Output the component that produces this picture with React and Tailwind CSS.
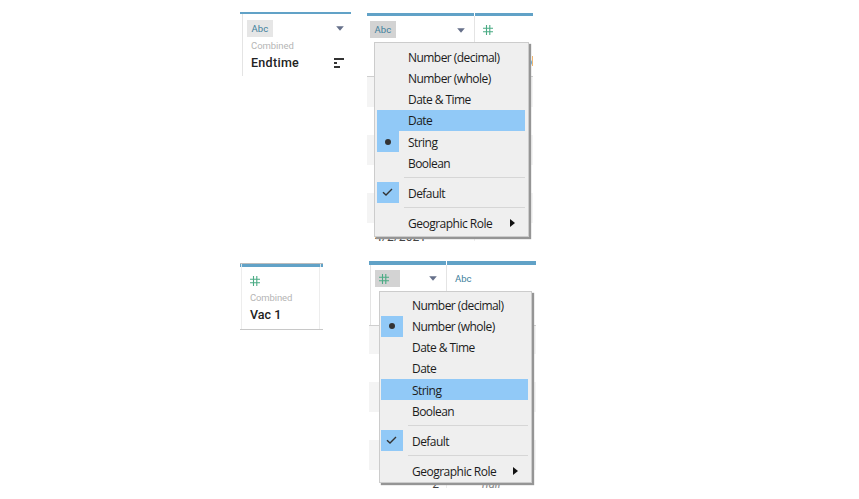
import React from "react";

const labels = ["Number (decimal)", "Number (whole)", "Date & Time", "Date", "String", "Boolean"];

function Hash() {
  return (
    <svg width="10" height="10" viewBox="0 0 10 10" fill="none" stroke="#4aab84" strokeWidth="1.1">
      <path d="M3.5 0V10M6.8 0V10M0 3.2H10M0 6.8H10" />
    </svg>
  );
}

function Caret() {
  return (
    <svg width="8" height="5" viewBox="0 0 8 5" fill="#66708a">
      <path d="M0.2 0.3H7.8L4 4.7Z" />
    </svg>
  );
}

function Marker({ on, children }) {
  return (
    <span className={`flex h-full w-[21.5px] shrink-0 items-center justify-center ${on ? "bg-[#91c9f7]" : ""}`}>
      {children}
    </span>
  );
}

function Check() {
  return (
    <svg width="11" height="9" viewBox="0 0 11 9" fill="none" stroke="#333" strokeWidth="1.4">
      <path d="M1 4.2L4 7L10 1" />
    </svg>
  );
}

function Separator() {
  return <div className="ml-[27px] h-px bg-[#d6d6d6]" />;
}

function Menu({ className, checked, active }) {
  return (
    <div
      className={`absolute border border-[#cccccc] bg-[#efefef] shadow-[2px_2px_1px_#959595] font-['Open_Sans','Noto_Sans',sans-serif] text-[12px] tracking-[-0.55px] text-[#1c1c1c] ${className}`}
    >
      {labels.map((label) => (
        <div key={label} className={`flex h-[21.17px] items-center ${active === label ? "bg-[#91c9f7]" : ""}`}>
          <Marker on={checked === label}>
            {checked === label && <span className="size-[6px] rounded-full bg-[#333]" />}
          </Marker>
          <span className="ml-[9.5px] whitespace-nowrap pt-[1.6px]">{label}</span>
        </div>
      ))}
      <div className="h-[4px]" />
      <Separator />
      <div className="mt-[4px] flex h-[21px] items-center">
        <Marker on>
          <Check />
        </Marker>
        <span className="ml-[9.5px] pt-[2px]">Default</span>
      </div>
      <div className="h-[4px]" />
      <Separator />
      <div className="mt-[4px] flex h-[21px] items-center pr-[10px]">
        <span className="ml-[31px] whitespace-nowrap pt-[2px] tracking-[-0.5px]">Geographic Role</span>
        <svg className="ml-auto" width="5" height="8" viewBox="0 0 5 8" fill="#111">
          <path d="M0 0L5 4L0 8Z" />
        </svg>
      </div>
    </div>
  );
}

function Stripes({ first }) {
  return (
    <>
      <div className={`bg-[#f4f4f4] ${first}`} />
      <div className="h-[28px]" />
      <div className="h-[30px] bg-[#f4f4f4]" />
      <div className="h-[28px]" />
      <div className="h-[30px] bg-[#f4f4f4]" />
    </>
  );
}

export default function App() {
  return (
    <div className="h-[499px] w-[859px] overflow-hidden bg-white pl-[240px] pt-[12px] font-[Roboto,sans-serif]">
      <div className="flex h-[249px] items-start">
        <section className="h-[64px] w-[111px] border-t-2 border-[#61a2c7]">
          <div className="ml-[2px] h-[62px] border-l border-[#e4e4e4] pl-[4px] pt-[6px]">
            <div className="flex items-center justify-between pr-[7px]">
              <span className="flex h-[17px] w-[26px] items-center justify-center bg-[#e6e6e6] pt-px text-[9.5px] tracking-[0.15px] text-[#40809c]">Abc</span>
              <Caret />
            </div>
            <div className="ml-[4px] mt-[2px] text-[9.5px] leading-[14px] tracking-[-0.05px] text-[#b5b5b5]">Combined</div>
            <div className="ml-[4px] mt-px flex items-center justify-between pr-[7px]">
              <span className="text-[12.5px] font-medium leading-[18px] tracking-[0.3px] text-[#222]">Endtime</span>
              <svg width="10" height="10" viewBox="0 0 10 10" fill="#333">
                <path d="M0 0H10V2H0ZM0 4H3V6H0ZM0 8H6V10H0Z" />
              </svg>
            </div>
          </div>
        </section>

        <section className="relative ml-[16px] h-[229px] w-[166px]">
          <div className="h-full overflow-hidden">
            <div className="flex h-[4px] gap-px pt-px">
              <div className="w-[107px] bg-[#61a2c7]" />
              <div className="flex-1 bg-[#61a2c7]" />
            </div>
            <div className="flex h-[61px] border-b border-[#cfcfcf]">
              <div className="flex h-full w-[108px] items-start justify-between border-r border-[#e4e4e4] pl-[3px] pr-[9px] pt-[5px]">
                <span className="flex h-[17px] w-[26px] items-center justify-center bg-[#d3d3d3] pt-px text-[9.5px] tracking-[0.15px] text-[#40809c]">Abc</span>
                <span className="mt-[7px]"><Caret /></span>
              </div>
              <div className="flex flex-1 flex-col justify-between overflow-hidden pb-[6px] pl-[8px] pt-[9px]">
                <Hash />
                <div className="flex justify-end text-[13px] font-medium leading-[17px] text-[#333]">
                  <span>o</span>
                  <span className="mt-[3px] h-[10px] w-px bg-[#efb672]" />
                </div>
              </div>
            </div>
            <Stripes first="h-[30px]" />
            <div className="flex h-[18px]">
              <div className="w-[108px] border-r border-[#ededed] pl-[8px] text-[12px] leading-[28px] tracking-[0.1px] text-[#444]">4/2/2021</div>
            </div>
          </div>
          <Menu className="left-[7px] top-[30px] h-[195px] w-[155px] pl-[2px] pr-[3px] pt-[3.5px]" checked="String" active="Date" />
        </section>
      </div>

      <div className="flex items-start">
        <section className="mt-[2px] h-[67px] w-[83px] border-b border-t border-b-[#c8c8c8] border-t-[#bcbcbc]">
          <div className="flex h-[3px] gap-px bg-[#d7e6ee]">
            <div className="w-px bg-[#61a2c7]" />
            <div className="flex-1 bg-[#61a2c7]" />
            <div className="w-[2px] bg-[#61a2c7]" />
          </div>
          <div className="mx-px mr-[3px] h-[62px] border-x border-[#ededed] pl-[8px] pt-[9px]">
            <Hash />
            <div className="mt-[5px] text-[9.5px] leading-[14px] tracking-[-0.12px] text-[#b5b5b5]">Combined</div>
            <div className="mt-px text-[12.5px] font-medium leading-[18px] text-[#222]">Vac 1</div>
          </div>
        </section>

        <section className="relative ml-[46px] h-[227px] w-[167px]">
          <div className="h-full overflow-hidden">
            <div className="flex h-[4px] gap-px">
              <div className="w-[77px] bg-[#61a2c7]" />
              <div className="flex-1 bg-[#61a2c7]" />
            </div>
            <div className="flex h-[61px] border-b border-[#cfcfcf]">
              <div className="ml-px flex w-[77px] items-start justify-between border-x border-[#e4e4e4] pl-[4px] pr-[9px] pt-[5px]">
                <span className="flex h-[17px] w-[25px] items-center bg-[#d3d3d3] pl-[4px]"><Hash /></span>
                <span className="mt-[6px]"><Caret /></span>
              </div>
              <span className="ml-[8px] mt-[7px] text-[9.5px] leading-[14px] text-[#40809c]">Abc</span>
            </div>
            <Stripes first="h-[28px]" />
            <div className="flex h-[18px] text-[12px] leading-[28px] text-[#444]">
              <div className="w-[78px] border-r border-[#ededed] pr-[7px] text-right">2</div>
              <div className="pl-[35px] italic text-[#888]">null</div>
            </div>
          </div>
          <Menu className="left-[10px] top-[30px] h-[192px] w-[153px] pl-px pr-[3px] pt-[2.5px]" checked="Number (whole)" active="String" />
        </section>
      </div>
    </div>
  );
}
